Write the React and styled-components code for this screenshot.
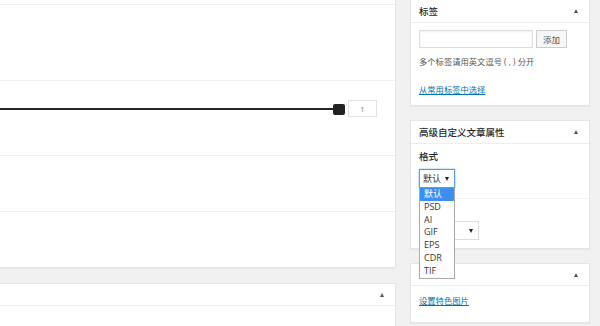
import React from "react";
import styled, { createGlobalStyle } from "styled-components";

const Global = createGlobalStyle`
  html, body { margin: 0; padding: 0; }
  body {
    background: #f1f1f1;
    font-family: "Open Sans", "Noto Sans CJK SC", sans-serif;
    color: #444;
    overflow: hidden;
  }
`;

const Page = styled.div`
  width: 600px;
  height: 326px;
  display: flex;
  align-items: flex-start;
  gap: 14px;
  overflow: hidden;
  background: #f1f1f1;
`;

const MainCol = styled.div`
  width: 396px;
  display: flex;
  flex-direction: column;
  gap: 15px;
`;

const Box = styled.div`
  background: #fff;
  border: 1px solid #e5e5e5;
  box-shadow: 0 1px 1px rgba(0, 0, 0, 0.04);
  box-sizing: border-box;
`;

const MainBox = styled(Box)`
  border-left: none;
  margin-top: -1px;
`;

const Row = styled.div`
  height: ${(p) => p.$h}px;
  border-top: ${(p) => (p.$first ? "none" : "1px solid #f0f0f0")};
  box-sizing: border-box;
  display: flex;
  align-items: flex-start;
`;

const SliderRow = styled(Row)`
  padding-top: 19px;
`;

const Track = styled.div`
  flex: 1;
  height: 2px;
  background: #262626;
  margin-top: 8px;
  position: relative;
`;

const Handle = styled.div`
  position: absolute;
  right: -11px;
  top: -4px;
  width: 12px;
  height: 11px;
  border-radius: 2px;
  background: #222;
`;

const NumBox = styled.div`
  margin-left: 14px;
  margin-right: 18px;
  width: 29px;
  height: 17px;
  border: 1px solid #e2e2e2;
  box-sizing: border-box;
  display: flex;
  align-items: center;
  justify-content: center;
  font-size: 7.5px;
  color: #777;
`;

const BottomBox = styled(Box)`
  border-left: none;
  height: 60px;
`;

const BoxHeader = styled.div`
  height: ${(p) => p.$h || 22}px;
  border-bottom: 1px solid #eee;
  box-sizing: content-box;
  display: flex;
  align-items: center;
  justify-content: space-between;
  padding: 0 11px 0 8px;
  font-size: 9.5px;
  font-weight: 500;
  color: #23282d;
`;

const Arrow = styled.span`
  width: 0;
  height: 0;
  border-left: 2.5px solid transparent;
  border-right: 2.5px solid transparent;
  border-bottom: 4px solid #555;
`;

const Side = styled.div`
  width: 180px;
  display: flex;
  flex-direction: column;
  gap: 14px;
  margin-top: -2px;
`;

const Inside = styled.div`
  padding: ${(p) => p.$pad || "7px 8px 0"};
  height: ${(p) => p.$h}px;
  box-sizing: border-box;
  position: relative;
`;

const TagLine = styled.div`
  display: flex;
  gap: 3px;
`;

const TagInput = styled.div`
  width: 114px;
  height: 18px;
  border: 1px solid #ddd;
  box-shadow: inset 0 1px 2px rgba(0, 0, 0, 0.07);
  box-sizing: border-box;
`;

const Btn = styled.div`
  width: 31px;
  height: 18px;
  border: 1px solid #ccc;
  background: #f7f7f7;
  box-sizing: border-box;
  font-size: 8.5px;
  color: #555;
  display: flex;
  align-items: center;
  justify-content: center;
`;

const Desc = styled.div`
  font-size: 8.3px;
  color: #555;
  margin-top: 8px;
  line-height: 12px;
  white-space: pre;
`;

const Link = styled.a`
  display: block;
  font-size: 8.3px;
  color: #0073aa;
  text-decoration: underline;
  margin-top: ${(p) => p.$mt}px;
  line-height: 12px;
`;

const Label = styled.div`
  font-size: 9.5px;
  font-weight: 500;
  color: #23282d;
  line-height: 12px;
`;

const Select = styled.div`
  width: ${(p) => p.$w}px;
  height: 19px;
  border: 1px solid ${(p) => (p.$focus ? "#5b9dd9" : "#ddd")};
  box-shadow: ${(p) => (p.$focus ? "0 0 2px rgba(30,140,190,.6)" : "none")};
  box-sizing: border-box;
  display: flex;
  align-items: center;
  justify-content: space-between;
  padding: 0 5px 0 3px;
  font-size: 9px;
  color: #333;
  background: #fff;
`;

const Caret = styled.span`
  width: 0;
  height: 0;
  border-left: 2.5px solid transparent;
  border-right: 2.5px solid transparent;
  border-top: 4px solid #222;
`;

const Divider = styled.div`
  height: 1px;
  background: #f3f3f3;
  margin: 10px -8px 0 0;
`;

const List = styled.ul`
  position: absolute;
  left: 8px;
  top: 44px;
  width: 36px;
  margin: 0;
  padding: 0;
  list-style: none;
  background: #fff;
  border: 1px solid #a9a9a9;
  border-top: none;
  box-sizing: border-box;
  z-index: 2;
`;

const Item = styled.li`
  height: 12.8px;
  line-height: 12.8px;
  padding-left: 4px;
  font-size: 9px;
  color: ${(p) => (p.$sel ? "#fff" : "#333")};
  background: ${(p) => (p.$sel ? "#3c8ff2" : "transparent")};
`;

export default function App() {
  const opts = ["默认", "PSD", "AI", "GIF", "EPS", "CDR", "TIF"];
  return (
    <>
      <Global />
      <Page>
        <MainCol>
          <MainBox>
            <Row $h={4} $first />
            <Row $h={76} />
            <SliderRow $h={75}>
              <Track>
                <Handle />
              </Track>
              <NumBox>1</NumBox>
            </SliderRow>
            <Row $h={56} />
            <Row $h={56} />
          </MainBox>
          <BottomBox>
            <BoxHeader $h={21}>
              <span />
              <Arrow />
            </BoxHeader>
          </BottomBox>
        </MainCol>
        <Side>
          <Box>
            <BoxHeader $h={23}>
              <span>标签</span>
              <Arrow />
            </BoxHeader>
            <Inside $h={82}>
              <TagLine>
                <TagInput />
                <Btn>添加</Btn>
              </TagLine>
              <Desc>多个标签请用英文逗号 ( , ) 分开</Desc>
              <Link $mt={16}>从常用标签中选择</Link>
            </Inside>
          </Box>
          <Box>
            <BoxHeader $h={22}>
              <span>高级自定义文章属性</span>
              <Arrow />
            </BoxHeader>
            <Inside $h={104} $pad="7px 8px 0">
              <Label>格式</Label>
              <div style={{ height: 6 }} />
              <Select $w={36} $focus>
                <span>默认</span>
                <Caret />
              </Select>
              <Divider />
              <div style={{ height: 22 }} />
              <Select $w={60}>
                <span />
                <Caret />
              </Select>
              <List>
                {opts.map((o, i) => (
                  <Item key={o} $sel={i === 0}>
                    {o}
                  </Item>
                ))}
              </List>
            </Inside>
          </Box>
          <Box>
            <BoxHeader $h={21}>
              <span />
              <Arrow />
            </BoxHeader>
            <Inside $h={36} $pad="9px 8px 0">
              <Link $mt={0}>设置特色图片</Link>
            </Inside>
          </Box>
        </Side>
      </Page>
    </>
  );
}
